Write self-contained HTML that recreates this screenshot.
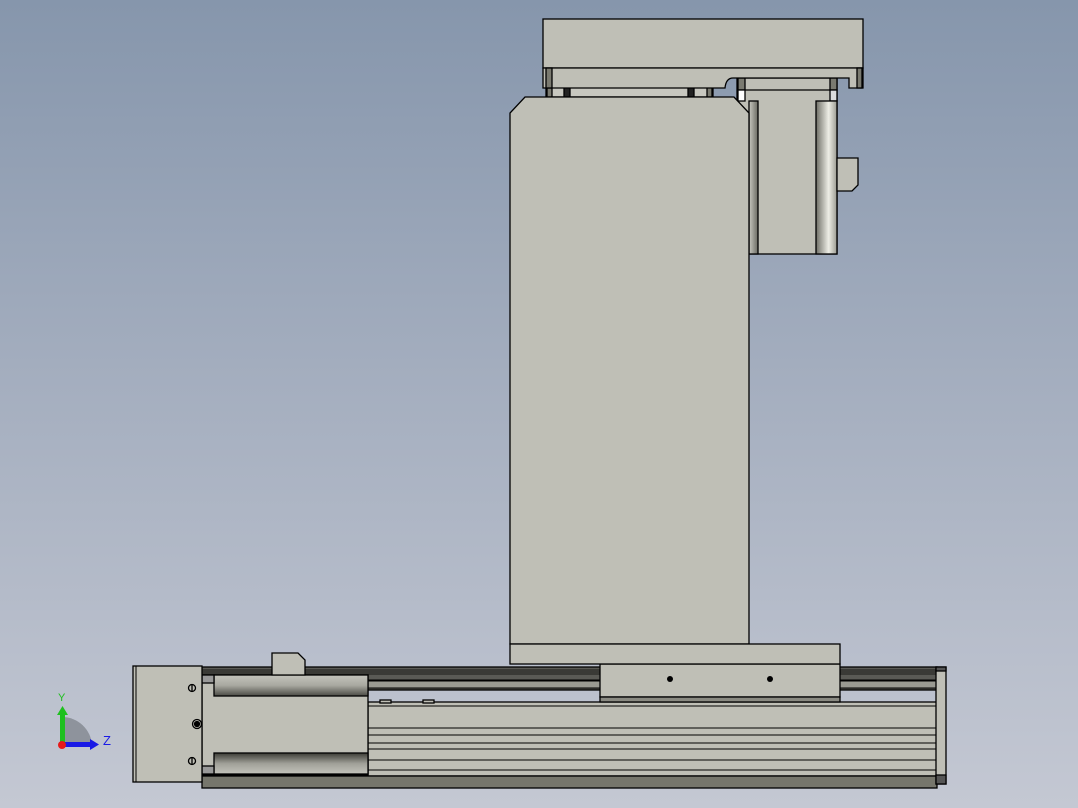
<!DOCTYPE html>
<html><head><meta charset="utf-8"><style>
html,body{margin:0;padding:0;width:1078px;height:808px;overflow:hidden}
body{background:linear-gradient(#8696ac 0%,#a3adbe 45%,#c4c8d3 100%)}
svg{position:absolute;left:0;top:0}
</style></head><body>
<svg width="1078" height="808" viewBox="0 0 1078 808" xmlns="http://www.w3.org/2000/svg">
<defs>
<linearGradient id="cylV" x1="0" y1="0" x2="1" y2="0">
<stop offset="0" stop-color="#6e6e66"/><stop offset="0.6" stop-color="#eeeee6"/><stop offset="1" stop-color="#9a9a90"/></linearGradient>
<linearGradient id="cylV2" x1="0" y1="0" x2="1" y2="0">
<stop offset="0" stop-color="#c8c8c0"/><stop offset="1" stop-color="#6a6a62"/></linearGradient>
<linearGradient id="cylH" x1="0" y1="0" x2="0" y2="1">
<stop offset="0" stop-color="#c4c4bc"/><stop offset="0.5" stop-color="#a8a8a0"/><stop offset="1" stop-color="#4a4a44"/></linearGradient>
<linearGradient id="cylH2" x1="0" y1="0" x2="0" y2="1">
<stop offset="0" stop-color="#3c3c36"/><stop offset="0.5" stop-color="#a0a098"/><stop offset="1" stop-color="#c4c4bc"/></linearGradient>
</defs>
<g stroke="#000" stroke-width="1.3" fill="#bfbfb6">
<!-- spacers -->
<rect x="546" y="86" width="167" height="11" fill="#c8c8c0"/>
<rect x="547" y="86" width="5" height="11" fill="#7a7a70"/>
<rect x="564" y="86" width="6" height="11" fill="#222"/>
<rect x="688" y="86" width="6" height="11" fill="#222"/>
<rect x="707" y="86" width="5" height="11" fill="#7a7a70"/>
<!-- motor box -->
<rect x="737" y="78" width="100" height="176"/>
<line x1="737" y1="90" x2="837" y2="90"/>
<rect x="738" y="78" width="7" height="12" fill="#7a7a70"/>
<rect x="830" y="78" width="7" height="12" fill="#7a7a70"/>
<rect x="738" y="90" width="7" height="11" fill="#fff"/>
<rect x="830" y="90" width="7" height="11" fill="#ddd"/>
<rect x="749" y="101" width="9" height="153" fill="url(#cylV2)"/>
<rect x="816" y="101" width="21" height="153" fill="url(#cylV)"/>
<path d="M837 158 H858 V185 L852 191 H837 Z"/>
<!-- top box -->
<rect x="543" y="19" width="320" height="49"/>
<path d="M543 68 H863 V88 H849 V78 H733 Q726 78 725 88 H543 Z"/>
<rect x="546" y="68" width="6" height="20" fill="#7a7a70"/>
<rect x="857" y="68" width="5" height="20" fill="#7a7a70"/>
<!-- column -->
<path d="M525 97 H734 L749 113 V644 H510 V113 Z"/>
<!-- rail upper dark strips -->
<rect x="202" y="667" width="735" height="23" fill="#5a5a55"/>
<rect x="202" y="669" width="735" height="6" fill="#3a3a36" stroke="none"/>
<line x1="202" y1="680" x2="937" y2="680" stroke-width="1"/>
<rect x="202" y="681" width="735" height="7" fill="#9a9a92" stroke-width="1"/>
<!-- rail body -->
<rect x="368" y="702" width="569" height="74"/>
<g stroke-width="1">
<line x1="368" y1="706" x2="937" y2="706"/>
<line x1="368" y1="728" x2="937" y2="728"/>
<line x1="368" y1="735" x2="937" y2="735"/>
<line x1="368" y1="743" x2="937" y2="743"/>
<line x1="368" y1="749" x2="937" y2="749"/>
<line x1="368" y1="760" x2="937" y2="760"/>
<line x1="368" y1="770" x2="937" y2="770"/>
</g>
<rect x="380" y="700" width="11" height="3"/>
<rect x="423" y="700" width="11" height="3"/>
<rect x="202" y="776" width="735" height="12" fill="#76766c"/>
<!-- right end cap -->
<rect x="936" y="667" width="10" height="117"/>
<rect x="936" y="667" width="10" height="4" fill="#555"/>
<rect x="936" y="775" width="10" height="9" fill="#555"/>
<!-- carriage -->
<rect x="600" y="664" width="240" height="33"/>
<rect x="600" y="697" width="240" height="5" fill="#8a8a82"/>
<rect x="510" y="644" width="330" height="20"/>
<!-- left motor -->
<rect x="202" y="675" width="166" height="100"/>
<rect x="214" y="675" width="154" height="21" fill="url(#cylH)"/>
<rect x="214" y="753" width="154" height="21" fill="url(#cylH2)"/>
<rect x="202" y="675" width="12" height="8" fill="#999"/>
<rect x="202" y="766" width="12" height="8" fill="#999"/>
<path d="M272 653 H298 L305 660 V675 H272 Z"/>
<!-- left end cap -->
<rect x="133" y="666" width="69" height="116"/>
<line x1="136" y1="666" x2="136" y2="782" stroke-width="1"/>
</g>
<g fill="#000">
<circle cx="670" cy="679" r="3"/><circle cx="770" cy="679" r="3"/>
</g>
<g fill="none" stroke="#000" stroke-width="1.3">
<circle cx="192" cy="688" r="3.5"/><line x1="192" y1="684" x2="192" y2="692"/>
<circle cx="197" cy="724" r="4.5"/><circle cx="197" cy="724" r="2.5" fill="#000"/>
<circle cx="192" cy="761" r="3.5"/><line x1="192" y1="757" x2="192" y2="765"/>
</g>
<!-- triad -->
<path d="M62 717 A30 30 0 0 1 92 745 L62 745 Z" fill="#8e939c"/>
<rect x="60" y="713" width="5" height="32" fill="#1ec01e"/>
<polygon points="57,715 62.5,706 68,715" fill="#1ec01e"/>
<rect x="62" y="742" width="30" height="5" fill="#1a1ae6"/>
<polygon points="90,739 99,744.5 90,750" fill="#1a1ae6"/>
<circle cx="62" cy="745" r="4" fill="#e61a1a"/>
<text x="58" y="701" font-family="Liberation Sans, sans-serif" font-size="11" fill="#1ec01e">Y</text>
<text x="103" y="745" font-family="Liberation Sans, sans-serif" font-size="13" fill="#1a1ae6">Z</text>
</svg>
</body></html>
